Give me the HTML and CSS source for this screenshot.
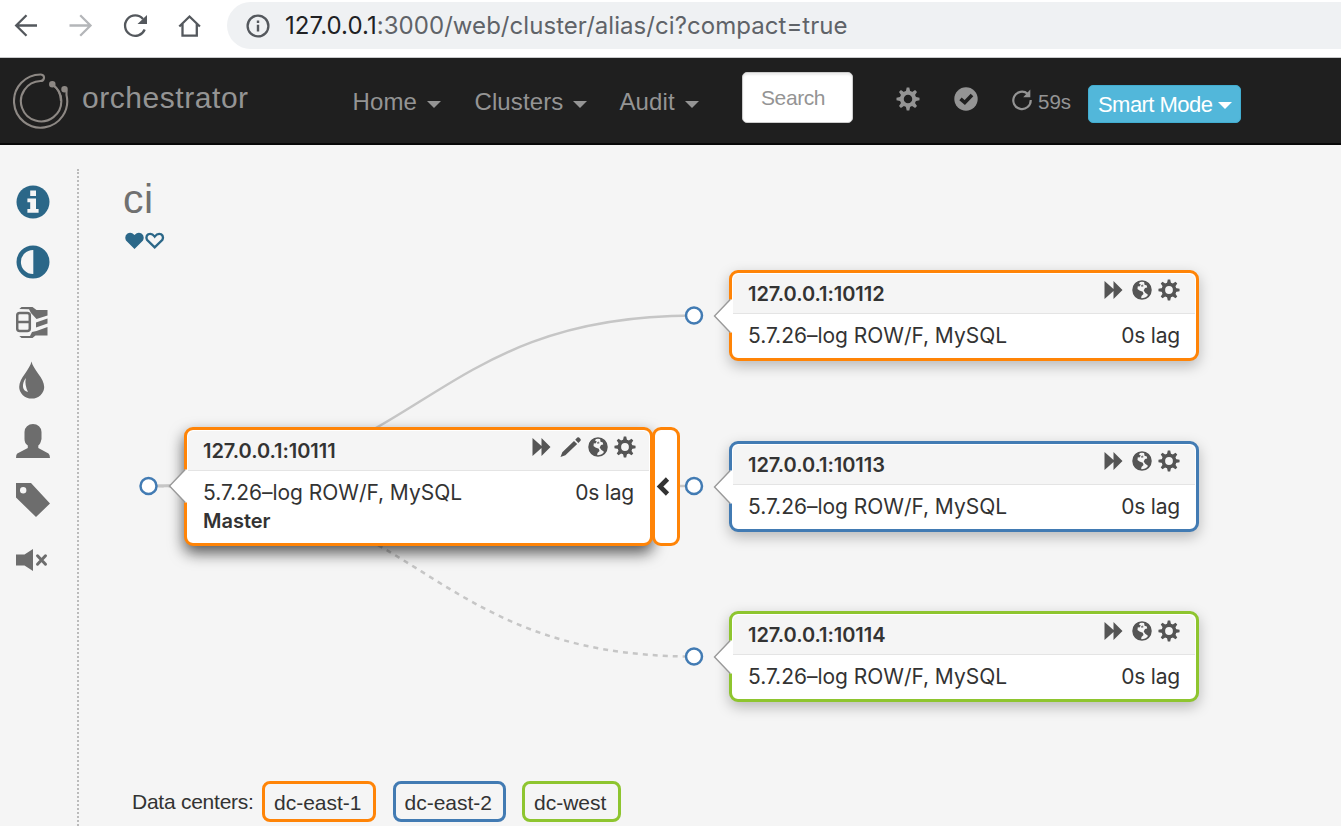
FILE: index.html
```html
<!DOCTYPE html>
<html lang="en">
<head>
<meta charset="utf-8">
<title>orchestrator - ci</title>
<link rel="stylesheet" href="styles.css">
</head>
<body>
<svg class="sprite" aria-hidden="true">
  <symbol id="cog" viewBox="0 0 24 24">
    <circle cx="12" cy="12" r="6.200" fill="none" stroke="currentColor" stroke-width="3.900"/>
    <path d="M10.700.5H13.300L14.300 5H9.700ZM10.700 23.500H13.300L14.300 19H9.700ZM.5 10.700V13.300L5 14.300V9.700ZM23.500 10.700V13.300L19 14.300V9.700ZM3 4.900L4.900 3L8.700 5.500L5.500 8.700ZM21 4.900L19.100 3L15.300 5.500L18.500 8.700ZM3 19.100L4.900 21L8.700 18.500L5.500 15.300ZM21 19.100L19.100 21L15.300 18.500L18.500 15.300Z" fill="currentColor"/>
  </symbol>
  <symbol id="forward" viewBox="0 0 19 18"><path d="M.5 0L9.500 8V0L18.500 9L9.500 18V10L.5 18Z" fill="currentColor"/></symbol>
  <symbol id="pencil" viewBox="0 0 22 22"><path d="M.5 21L2.300 16.200L14 4.900L17.200 8L5.400 19.300ZM15.200 3.700L17.300 1.600Q18.200.8 19.100 1.600L20.500 3Q21.300 3.900 20.500 4.800L18.400 6.900Z" fill="currentColor"/></symbol>
  <symbol id="globe" viewBox="0 0 20 20">
    <circle cx="10" cy="10" r="9" fill="#f5f5f5" stroke="currentColor" stroke-width="1.500"/>
    <path d="M1 10C1 5 4 1.500 8.500 1L7 3.500L8.800 4.600L7.500 6.500L5.800 6.300L5.500 9L7.500 10.500L10.800 11.800L11.500 14L9.500 16L9 19C4 18.500 1 14.500 1 10ZM12 1.300C16 2 19 6 19 10C19 13 17.600 15.800 15.500 17.300L15.700 14.500L13.200 12.800L11.700 10.500L13 8L15.200 7.600L14.800 5.600L12.500 4.800Z" fill="currentColor"/>
    <path d="M9 5.200l2-.8.500 1.800-2 .8z" fill="#777"/>
  </symbol>
</svg>

<header class="browser">
  <svg class="tools" viewBox="0 0 227 57" fill="none" stroke="#54585d" stroke-width="2.3">
    <path d="M37 25.500H16.500M26.500 15.200L16.200 25.500L26.500 35.800"/>
    <path d="M69.500 25.500H90M80.200 15.200L90.500 25.500L80.200 35.800" stroke="#b4b6b9"/>
    <path d="M144.700 29.500A10.200 10.200 0 1 1 143 19"/><path d="M147 15V24H137.500Z" fill="#54585d" stroke="none"/>
    <path d="M179.300 26.500L189.500 16.500L199.900 26.500M182.500 24V35.700H196.800V24"/>
  </svg>
  <div class="address">
    <svg class="info" viewBox="0 0 24 24"><circle cx="12" cy="12" r="10.400" fill="none" stroke="#54585d" stroke-width="2.300"/><path d="M12 10.700v6.800M12 6.500v2.500" stroke="#54585d" stroke-width="2.400"/></svg>
    <span class="url"><b>127.0.0.1</b>:3000/web/cluster/alias/ci?compact=true</span>
  </div>
</header>

<nav class="navbar">
  <svg class="logo" viewBox="0 0 56 56" fill="none" stroke="#8d8884" stroke-width="2.100">
    <path d="M28 1.500A26.600 26.600 0 1 0 53.500 22V17.500M28 1.500Q31.300 2 31 5Q30.500 8 27.500 8A20.200 20.200 0 1 0 39.500 11.500"/>
    <path d="M39.500 11.500Q48 18 48 28"/>
    <circle cx="39.300" cy="11.300" r="2.200" fill="#8d8884"/><circle cx="51.500" cy="16.200" r="2.200" fill="#8d8884"/>
  </svg>
  <span class="brand">orchestrator</span>
  <a class="menu home">Home<i class="caret"></i></a>
  <a class="menu clusters">Clusters<i class="caret"></i></a>
  <a class="menu audit">Audit<i class="caret"></i></a>
  <div class="search">Search</div>
  <svg class="nav-cog"><use href="#cog"/></svg>
  <svg class="nav-check" viewBox="0 0 24 24"><circle cx="12" cy="12" r="11.700" fill="#949494"/><path d="M6.500 11.800L10.800 15.500L18 8" fill="none" stroke="#1f1f1f" stroke-width="3.600"/></svg>
  <svg class="nav-refresh" viewBox="0 0 22 22"><path d="M16.700 4.800A8.700 8.700 0 1 0 19.700 11" fill="none" stroke="#949494" stroke-width="2.200"/><path d="M19.300.5V8.300H12.200Z" fill="#949494"/></svg>
  <span class="timer">59s</span>
  <span class="smart">Smart Mode<i class="caret"></i></span>
</nav>

<div class="page">
  <aside class="sidebar">
    <svg viewBox="0 0 34 34" class="active"><circle cx="17" cy="17" r="16.500" fill="currentColor"/><path d="M14.200 5.500H20V11H14.200ZM11.400 13.600H20V24H22.600V27.700H11.400V24H14.200V17.300H11.400Z" fill="#f5f5f5"/></svg>
    <svg viewBox="0 0 34 34" class="active"><circle cx="17" cy="17" r="14.300" fill="none" stroke="currentColor" stroke-width="4.400"/><path d="M17.300 4V30A13 13 0 0 0 17.300 4Z" fill="currentColor"/></svg>
    <svg viewBox="0 0 34 34"><g fill="none" stroke="currentColor" stroke-width="2.500"><rect x="1.200" y="9" width="12.600" height="18" rx="2.500"/><path d="M2 18H13"/></g><path d="M3.300 5L5.500 3H16.500L20.500 6H31.500V11.500L20.500 15L15 9L13 5.300ZM20 18.500L31.500 14.500V19.500L20 23.500ZM20.500 27L31.500 23V31.500H19.500L16.500 34H5.500L3.300 32H14L16 28Z" fill="currentColor"/></svg>
    <svg viewBox="0 0 34 38" class="tint"><path d="M15.500.5C17 8.500 28.200 17 28.200 26A12.500 11.500 0 0 1 3.200 26C3.200 17 14 8.500 15.500.5Z" fill="currentColor"/><path d="M9.800 17C5.500 23 6 30 12 31Q8.500 24 9.800 17Z" fill="#f5f5f5"/></svg>
    <svg viewBox="0 0 34 34"><path d="M8.500 8A8.500 8 0 0 1 25.500 8V15Q24.500 20 22.300 21.500V24L32.500 29.500Q34 30.700 34 34.300H0Q0 30.500 1.300 29.500L11.800 24V21.500Q8.500 19.500 8.500 15Z" fill="currentColor"/></svg>
    <svg viewBox="0 0 34 34"><path d="M0 0H15L34 20.500L20 34L0 14.500ZM7.200 4A3.200 3.200 0 1 0 7.200 10.400A3.200 3.200 0 1 0 7.200 4Z" fill="currentColor" fill-rule="evenodd"/></svg>
    <svg viewBox="0 0 34 34"><path d="M0 11.500H8.500L17 6V28L8.500 22.500H0Z" fill="currentColor"/><path d="M21.500 12.800L29.500 21.200M29.500 12.800L21.500 21.200" stroke="currentColor" stroke-width="3" stroke-linecap="round"/></svg>
  </aside>

  <main class="content">
    <h1>ci</h1>
    <svg class="hearts" viewBox="0 0 40 18"><path d="M9.500 17L1 8.500Q-1 4 2.500 1.500Q6-.8 9.500 3Q13-.8 16.500 1.500Q20 4 18 8.500Z" fill="#2b6788"/><path d="M29.700 15.400L22 7.800Q20.400 4.300 23.300 2.300Q26.700.8 29.700 4.600Q32.700.8 36.100 2.300Q39 4.300 37.400 7.800Z" fill="none" stroke="#2b6788" stroke-width="2.300"/></svg>

    <section class="canvas">
      <svg class="links" viewBox="79 255 1141 470">
        <g fill="none" stroke="#c6c6c6" stroke-width="2.500">
          <path d="M148.500 486C421 486 421 315.500 694 315.500"/><path d="M148.500 486H694"/><path d="M148.500 486C421 486 421 656.500 694 656.500" stroke-dasharray="5 5"/>
        </g>
        <g fill="#fff" stroke="#427bb3" stroke-width="2.500"><circle cx="148.500" cy="486" r="8"/><circle cx="694" cy="315.500" r="8"/><circle cx="694" cy="486" r="8"/><circle cx="694" cy="656.500" r="8"/></g>
      </svg>

      <article class="node master orange">
        <svg class="arrow" viewBox="0 0 20 36"><path d="M17.300 1.500L1.500 18L17.300 34.500H20V1.500Z" fill="#fff"/><path d="M17.300 1.500L1.500 18L17.300 34.500" fill="none" stroke="#999" stroke-width="1.400"/></svg>
        <h3>127.0.0.1:10111<span class="icons"><svg class="fwd"><use href="#forward"/></svg><svg class="pen"><use href="#pencil"/></svg><svg class="glb"><use href="#globe"/></svg><svg class="cg"><use href="#cog"/></svg></span></h3>
        <p><span>5.7.26–log ROW/F, MySQL</span><em>0s lag</em></p>
        <strong>Master</strong>
      </article>
      <div class="toggle orange"><svg viewBox="0 0 14 20"><path d="M11.500 2L4 9.500L11.500 17" fill="none" stroke="#333" stroke-width="4.600"/></svg></div>

      <article class="node n2 orange">
        <svg class="arrow" viewBox="0 0 20 36"><path d="M17.300 1.500L1.500 18L17.300 34.500H20V1.500Z" fill="#fff"/><path d="M17.300 1.500L1.500 18L17.300 34.500" fill="none" stroke="#999" stroke-width="1.400"/></svg>
        <h3>127.0.0.1:10112<span class="icons"><svg class="fwd"><use href="#forward"/></svg><svg class="glb"><use href="#globe"/></svg><svg class="cg"><use href="#cog"/></svg></span></h3>
        <p><span>5.7.26–log ROW/F, MySQL</span><em>0s lag</em></p>
      </article>
      <article class="node n3 blue">
        <svg class="arrow" viewBox="0 0 20 36"><path d="M17.300 1.500L1.500 18L17.300 34.500H20V1.500Z" fill="#fff"/><path d="M17.300 1.500L1.500 18L17.300 34.500" fill="none" stroke="#999" stroke-width="1.400"/></svg>
        <h3>127.0.0.1:10113<span class="icons"><svg class="fwd"><use href="#forward"/></svg><svg class="glb"><use href="#globe"/></svg><svg class="cg"><use href="#cog"/></svg></span></h3>
        <p><span>5.7.26–log ROW/F, MySQL</span><em>0s lag</em></p>
      </article>
      <article class="node n4 green">
        <svg class="arrow" viewBox="0 0 20 36"><path d="M17.300 1.500L1.500 18L17.300 34.500H20V1.500Z" fill="#fff"/><path d="M17.300 1.500L1.500 18L17.300 34.500" fill="none" stroke="#999" stroke-width="1.400"/></svg>
        <h3>127.0.0.1:10114<span class="icons"><svg class="fwd"><use href="#forward"/></svg><svg class="glb"><use href="#globe"/></svg><svg class="cg"><use href="#cog"/></svg></span></h3>
        <p><span>5.7.26–log ROW/F, MySQL</span><em>0s lag</em></p>
      </article>
    </section>

    <footer class="legend">
      <span class="label">Data centers:</span>
      <span class="dc dc1 orange">dc-east-1</span>
      <span class="dc dc2 blue">dc-east-2</span>
      <span class="dc dc3 green">dc-west</span>
    </footer>
  </main>
</div>
</body>
</html>
```
FILE: styles.css
```css
* { box-sizing: border-box; }
body { margin: 0; height: 826px; overflow: hidden; background: #f5f5f5; color: #333; font-family: "Liberation Sans", Arial, sans-serif; }
svg { display: block; flex: none; }
.sprite { position: absolute; width: 0; height: 0; }

.browser { height: 58px; background: #fff; border-bottom: 1px solid #c9cacc; display: flex; }
.tools { width: 227px; height: 57px; }
.address { flex: 1; height: 47px; margin-top: 2px; background: #eff1f3; border-radius: 24px 0 0 24px; display: flex; align-items: center; padding-left: 19px; }
.info { width: 24px; height: 24px; margin-right: 15px; }
.url { font: 24px/48px Inter, sans-serif; color: #5f6368; letter-spacing: .05px; white-space: nowrap; }
.url b { font-weight: 400; color: #202124; }

.navbar { height: 87px; background: #1f1f1f; border-bottom: 2px solid #080808; display: flex; color: #949494; padding-left: 13px; white-space: nowrap; }
.logo { width: 56px; height: 56px; margin-top: 15px; }
.brand { width: 271px; padding-left: 13px; font-size: 30px; line-height: 80px; letter-spacing: .55px; }
.menu { display: flex; font-size: 24px; line-height: 87px; letter-spacing: .1px; }
.home { width: 122px; margin-left: 12.500px; }
.clusters { width: 145px; }
.audit { width: 122.500px; }
.caret { width: 0; height: 0; margin: 43px 0 0 10px; border: 7px solid transparent; border-top-color: currentColor; border-bottom: 0; }
.search { width: 111px; height: 51px; margin-top: 14px; padding-left: 18px; background: #fff; border: 1px solid #ccc; border-radius: 5px; box-shadow: inset 0 2px 2px rgba(0, 0, 0, .08); color: #949494; font-size: 21px; line-height: 50px; letter-spacing: -.4px; }
.nav-cog { width: 24px; height: 24px; margin: 29px 0 0 43px; }
.nav-check { width: 24px; height: 24px; margin: 29px 0 0 34px; }
.nav-refresh { width: 22px; height: 22px; margin: 31px 0 0 33px; }
.timer { width: 50px; margin-left: 5px; font-size: 20.500px; line-height: 87px; }
.smart { width: 153px; height: 38px; margin-top: 27px; padding-left: 9px; display: flex; background: #52b7da; border: 1px solid #42add0; border-radius: 5px; color: #fff; font-size: 22px; line-height: 37px; letter-spacing: -.55px; }
.smart .caret { margin: 16px 0 0 6px; }

.page { display: flex; height: 681px; }
.sidebar { width: 79px; height: 657px; margin-top: 24px; border-right: 2px dotted #bbb; display: flex; flex-direction: column; gap: 25.700px; padding: 16px 0 0 16px; color: #6d6d6d; }
.sidebar svg { width: 34px; height: 34px; }
.sidebar .tint { height: 38px; margin: -3px 0 -1px; }
.sidebar .active { color: #2b6788; }
.content { width: 1262px; }
h1 { margin: 30px 0 0 44px; font-size: 41px; line-height: 49px; font-weight: 400; color: #707070; letter-spacing: .5px; }
.hearts { width: 40px; height: 18px; margin: 8px 0 0 46px; }

.canvas { position: relative; width: 1141px; height: 470px; margin-top: 5px; }
.links { position: absolute; left: 0; top: 0; width: 1141px; height: 470px; }
.node { position: absolute; left: 650px; width: 470px; height: 91px; border: 3.500px solid; border-radius: 9px; background: #fff; background-clip: padding-box; box-shadow: 0 5px 14px rgba(0, 0, 0, .25); font-family: Inter, sans-serif; font-size: 21px; padding: 1px 1px 0; }
.orange { border-color: #ff8407; }
.blue { border-color: #427bb3; }
.green { border-color: #8ec52f; }
.master { left: 105px; top: 172px; width: 469px; height: 119px; box-shadow: 0 7px 15px rgba(0, 0, 0, .65); }
.n2 { top: 15px; }
.n3 { top: 186px; }
.n4 { top: 356px; }
.arrow { position: absolute; left: -19px; top: 25px; width: 20px; height: 36px; }
.master .arrow { top: 38px; }
.node h3 { display: flex; justify-content: space-between; height: 40px; margin: 0; padding: 0 15px; border-bottom: 1px solid #e4e4e4; border-radius: 6px 6px 0 0; background: #f5f5f5; font-size: 20px; line-height: 40px; font-weight: 600; letter-spacing: -.05px; }
.icons { display: flex; align-items: center; color: #555; padding-bottom: 7px; }
.fwd { width: 19px; height: 18px; margin-right: 9px; }
.pen { width: 22px; height: 22px; margin-right: 6px; }
.glb { width: 20px; height: 20px; margin-right: 6px; }
.cg { width: 22px; height: 22px; }
.master h3, .master p { padding-right: 13px; }
.node p { display: flex; justify-content: space-between; margin: 0; padding: 8px 15px 0; line-height: 28px; letter-spacing: -.03px; }
.node em { font-style: normal; letter-spacing: -.2px; }
.node strong { display: block; padding-left: 15px; font-size: 20px; line-height: 28px; font-weight: 600; }
.toggle { position: absolute; left: 573px; top: 172px; width: 28px; height: 119px; border: 3.500px solid #ff8407; border-radius: 9px; background: #fff; display: flex; align-items: center; }
.toggle svg { width: 14px; height: 20px; margin-left: 1px; }

.legend { display: flex; padding-left: 53px; margin-top: 56px; font-size: 21px; line-height: 42px; white-space: nowrap; }
.label { width: 130px; letter-spacing: -.25px; }
.dc { height: 41px; border: 3px solid; border-radius: 8px; line-height: 37px; padding-left: 9px; }
.dc1 { width: 114px; border-color: #ff8407; }
.dc2 { width: 113px; margin-left: 16.500px; border-color: #427bb3; }
.dc3 { width: 99px; margin-left: 16.500px; border-color: #8ec52f; }
```
